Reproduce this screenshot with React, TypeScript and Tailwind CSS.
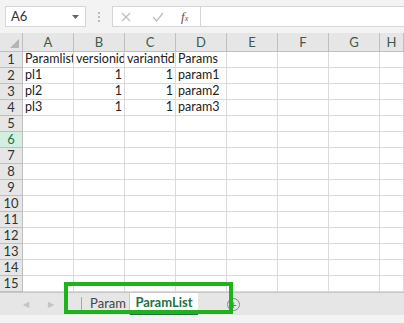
const cols = ["A", "B", "C", "D", "E", "F", "G", "H"];

type Cell = { v: string; num?: boolean };

const data: Record<number, Cell[]> = {
  1: [{ v: "Paramlist(" }, { v: "versionid" }, { v: "variantid" }, { v: "Params" }],
  2: [{ v: "pl1" }, { v: "1", num: true }, { v: "1", num: true }, { v: "param1" }],
  3: [{ v: "pl2" }, { v: "1", num: true }, { v: "1", num: true }, { v: "param2" }],
  4: [{ v: "pl3" }, { v: "1", num: true }, { v: "1", num: true }, { v: "param3" }],
};

function FormulaBar() {
  return (
    <div className="h-[33px] bg-[#f3f3f3] flex items-center pl-[5px]">
      <div className="w-[81px] h-[21px] bg-white border border-[#d6d6d6] flex items-center justify-between px-[5px] text-[13px] text-[#333]">
        <span>A6</span>
        <svg width="7" height="4" viewBox="0 0 7 4" className="mr-[1px]">
          <path d="M0 0h7L3.5 4z" fill="#666" />
        </svg>
      </div>
      <div className="w-[26px] flex flex-col items-center gap-[2px]">
        <div className="w-[2px] h-[2px] bg-[#bbb]" />
        <div className="w-[2px] h-[2px] bg-[#bbb]" />
        <div className="w-[2px] h-[2px] bg-[#bbb]" />
      </div>
      <div className="w-[88px] h-[21px] bg-white border border-[#d6d6d6] border-r-0 flex items-center">
        <svg width="10" height="10" viewBox="0 0 10 10" className="ml-[8px]">
          <path d="M1 1l8 8M9 1l-8 8" stroke="#bdbdbd" strokeWidth="1.2" />
        </svg>
        <svg width="12" height="10" viewBox="0 0 12 10" className="ml-[21px]">
          <path d="M1 5l3.5 4L11 1" stroke="#bdbdbd" strokeWidth="1.2" fill="none" />
        </svg>
        <span className="ml-[17px] italic font-['Liberation_Serif',serif] text-[13px] text-[#555]">
          f<span className="text-[8px]">x</span>
        </span>
      </div>
      <div className="flex-1 h-[21px] bg-white border border-[#d6d6d6] border-r-0" />
    </div>
  );
}

function Grid() {
  const rows = Array.from({ length: 15 }, (_, i) => i + 1);
  return (
    <div className="grid grid-cols-[23px_repeat(7,51px)_1fr] text-[12.5px] leading-none">
      <div className="h-[19px] bg-[#e6e6e6] border-r border-b border-[#bfbfbf] flex items-end justify-end p-[3px]">
        <svg width="9" height="9" viewBox="0 0 9 9">
          <path d="M9 0v9H0z" fill="#b4b4b4" />
        </svg>
      </div>
      {cols.map((c) => (
        <div
          key={c}
          className="h-[19px] bg-[#e6e6e6] border-r border-b border-[#bfbfbf] flex items-center justify-center text-[#3f5a4c] text-[13px]"
        >
          {c}
        </div>
      ))}
      {rows.map((r) => (
        <Row key={r} r={r} />
      ))}
    </div>
  );
}

function Row({ r }: { r: number }) {
  const cells = data[r] ?? [];
  const sel = r === 6;
  return (
    <>
      <div
        className={
          sel
            ? "h-[16px] bg-[#d2f0e0] border-r border-b border-[#bfbfbf] flex items-center justify-center text-[#217346] text-[13px]"
            : "h-[16px] bg-[#e6e6e6] border-r border-b border-[#bfbfbf] flex items-center justify-center text-[#333] text-[13px]"
        }
      >
        {r}
      </div>
      {cols.map((c, i) => {
        const cell = cells[i];
        return (
          <div
            key={c}
            className={
              cell?.num
                ? "h-[16px] border-r border-b border-[#dadada] flex items-center justify-end pr-[2px] text-[#222] overflow-hidden whitespace-nowrap"
                : "h-[16px] border-r border-b border-[#dadada] flex items-center pl-[2px] text-[#222] overflow-hidden whitespace-nowrap"
            }
          >
            {cell?.v}
          </div>
        );
      })}
    </>
  );
}

function TabBar() {
  return (
    <div className="relative h-[23px] bg-[#e6e6e6] border-t border-[#c8c8c8] flex items-stretch text-[13px]">
      <div className="w-[81px] flex items-center pl-[23px] gap-[19px] text-[#c4c4c4] text-[8px]">
        <span>◀</span>
        <span>▶</span>
      </div>
      <div className="w-[1px] my-[4px] bg-[#a8a8a8]" />
      <div className="w-[5px]" />
      <div className="w-[43px] flex items-center justify-center text-[#444] border-r border-[#c8c8c8]">Param</div>
      <div className="w-[68px] bg-white flex items-center justify-center font-bold text-[#217346] border-b-2 border-[#217346]">
        ParamList
      </div>
      <div className="ml-[29px] flex items-center">
        <div className="w-[13px] h-[13px] rounded-full border border-[#888] flex items-center justify-center text-[#777] text-[11px] leading-none">
          +
        </div>
      </div>
      <div className="absolute left-[64px] top-[-11px] w-[169px] h-[32px] border-[4px] border-[#1fb21a]" />
    </div>
  );
}

export default function App() {
  return (
    <div className="w-[404px] h-[323px] overflow-hidden bg-white font-['Lato',sans-serif]">
      <FormulaBar />
      <Grid />
      <TabBar />
      <div className="h-[10px] bg-[#f3f3f3]" />
    </div>
  );
}
